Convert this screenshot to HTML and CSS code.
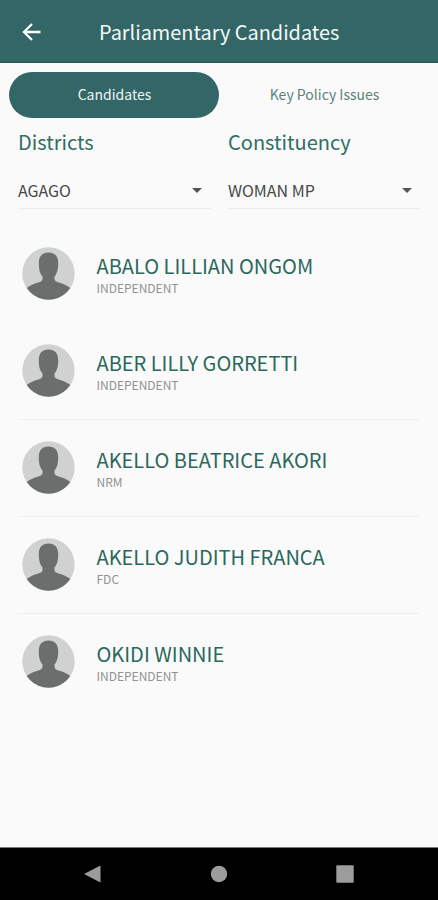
FILE: index.html
```html
<!DOCTYPE html>
<html lang="en">
<head>
  <meta charset="UTF-8">
  <meta name="viewport" content="width=device-width, initial-scale=1">
  <title>Parliamentary Candidates</title>
  <link rel="stylesheet" href="styles.css">
</head>
<body>
  <!-- shared avatar placeholder -->
  <svg class="defs" width="0" height="0">
    <symbol id="avatar" viewBox="0 0 53 53">
      <clipPath id="round"><circle cx="26.5" cy="26.5" r="26.2"/></clipPath>
      <g clip-path="url(#round)">
        <rect width="53" height="53" fill="#d0d2d1"/>
        <path fill="#6b6e6d" d="M26.5 5.5C20 5.5 16.8 9.6 16.8 16C16.8 22 17.6 26 20.5 29.5V32C20.300 34 19 34.6 15.500 35.700C11 37.100 8 38.500 4 41.500V53H49V41.500C45 38.500 42 37.100 37.500 35.700C34 34.600 32.700 34 32.500 32V29.500C35.400 26 36.200 22 36.200 16C36.200 9.600 33 5.500 26.500 5.500z"/>
      </g>
    </symbol>
  </svg>

  <header class="topbar">
    <svg class="back" viewBox="0 0 20 20"><path d="M18.5 10H2.5M10 2L2 10l8 8"/></svg>
    <h1>Parliamentary Candidates</h1>
  </header>

  <nav class="tabs">
    <button class="tab active">Candidates</button>
    <button class="tab">Key Policy Issues</button>
  </nav>

  <section class="filters">
    <div class="filter">
      <h2>Districts</h2>
      <div class="dropdown"><span>AGAGO</span><i class="caret"></i></div>
    </div>
    <div class="filter">
      <h2>Constituency</h2>
      <div class="dropdown"><span>WOMAN MP</span><i class="caret"></i></div>
    </div>
  </section>

  <ul class="candidates">
    <li>
      <svg class="avatar"><use href="#avatar"/></svg>
      <div><h3>ABALO LILLIAN ONGOM</h3><p>INDEPENDENT</p></div>
    </li>
    <li>
      <svg class="avatar"><use href="#avatar"/></svg>
      <div><h3>ABER LILLY GORRETTI</h3><p>INDEPENDENT</p></div>
    </li>
    <li>
      <svg class="avatar"><use href="#avatar"/></svg>
      <div><h3>AKELLO BEATRICE AKORI</h3><p>NRM</p></div>
    </li>
    <li>
      <svg class="avatar"><use href="#avatar"/></svg>
      <div><h3>AKELLO JUDITH FRANCA</h3><p>FDC</p></div>
    </li>
    <li>
      <svg class="avatar"><use href="#avatar"/></svg>
      <div><h3>OKIDI WINNIE</h3><p>INDEPENDENT</p></div>
    </li>
  </ul>

  <footer class="navbar">
    <svg viewBox="0 0 18 18"><path d="M16.5 0.5v17L0 9z"/></svg>
    <svg viewBox="0 0 18 18"><circle cx="9" cy="9" r="8.2"/></svg>
    <svg viewBox="0 0 18 18"><rect x="0.3" y="0.3" width="17.4" height="17.4" rx="1"/></svg>
  </footer>
</body>
</html>
```
FILE: styles.css
```css
* {
  box-sizing: border-box;
}
body {
  margin: 0;
  height: 900px;
  display: flex;
  flex-direction: column;
  background: #fafafa;
  font-family: "Noto Sans CJK SC", "Noto Sans", sans-serif;
  overflow: hidden;
}
h1, h2, h3, p, ul {
  margin: 0;
  padding: 0;
  font-weight: 400;
}
.defs {
  position: absolute;
}

/* top bar */
.topbar {
  display: flex;
  align-items: center;
  height: 63px;
  padding: 2px 22px 0;
  background: #336666;
  border-bottom: 1px solid #285857;
  color: #f3f8f8;
}
.back {
  width: 20px;
  height: 20px;
  fill: none;
  stroke: #fff;
  stroke-width: 2.3;
}
.topbar h1 {
  margin-left: 57px;
  font-size: 19.9px;
  line-height: 30px;
  white-space: nowrap;
}

/* tabs */
.tabs {
  display: flex;
  padding: 9px 9px 0;
}
.tab {
  width: 210px;
  height: 46px;
  padding: 0 0 2px 1px;
  border: none;
  border-radius: 23px;
  background: none;
  color: #5b8279;
  font-family: inherit;
  font-size: 14px;
  line-height: 22px;
}
.tab.active {
  background: #336666;
  color: #eef5f5;
}

/* filters */
.filters {
  display: flex;
  gap: 17px;
  padding: 8px 17px 0 18px;
}
.filter {
  width: 193px;
}
.filter h2 {
  height: 32px;
  color: #306d62;
  font-size: 20px;
  line-height: 32px;
}
.dropdown {
  display: flex;
  align-items: center;
  justify-content: space-between;
  height: 51px;
  padding: 14px 9px 0 0;
  border-bottom: 1px solid #ececec;
  color: #484848;
  font-size: 16px;
  line-height: 24px;
}
.caret {
  border: 5.5px solid transparent;
  border-top-color: #555;
  border-bottom: none;
}

/* candidate list */
.candidates {
  flex: 1;
  padding: 17px 18px 0;
  list-style: none;
}
.candidates li {
  display: flex;
  align-items: center;
  height: 97px;
  padding: 0 0 1px 4px;
  border-bottom: 1px solid #efefef;
}
.candidates li:first-child {
  border-color: #f8f8f8;
}
.candidates li:last-child {
  border-color: transparent;
}
.candidates div {
  padding-top: 2px;
}
.avatar {
  width: 53px;
  height: 53px;
  margin-right: 21.5px;
}
.candidates h3 {
  color: #2b685c;
  font-size: 20px;
  line-height: 26px;
  white-space: nowrap;
}
.candidates p {
  color: #929292;
  font-size: 12px;
  line-height: 18px;
}

/* system navigation */
.navbar {
  display: flex;
  align-items: center;
  justify-content: space-between;
  height: 53px;
  padding: 0 84px;
  background: #000;
  border-top: 1px solid #777;
}
.navbar svg {
  width: 18px;
  height: 18px;
  fill: #9c9c9c;
}
```
